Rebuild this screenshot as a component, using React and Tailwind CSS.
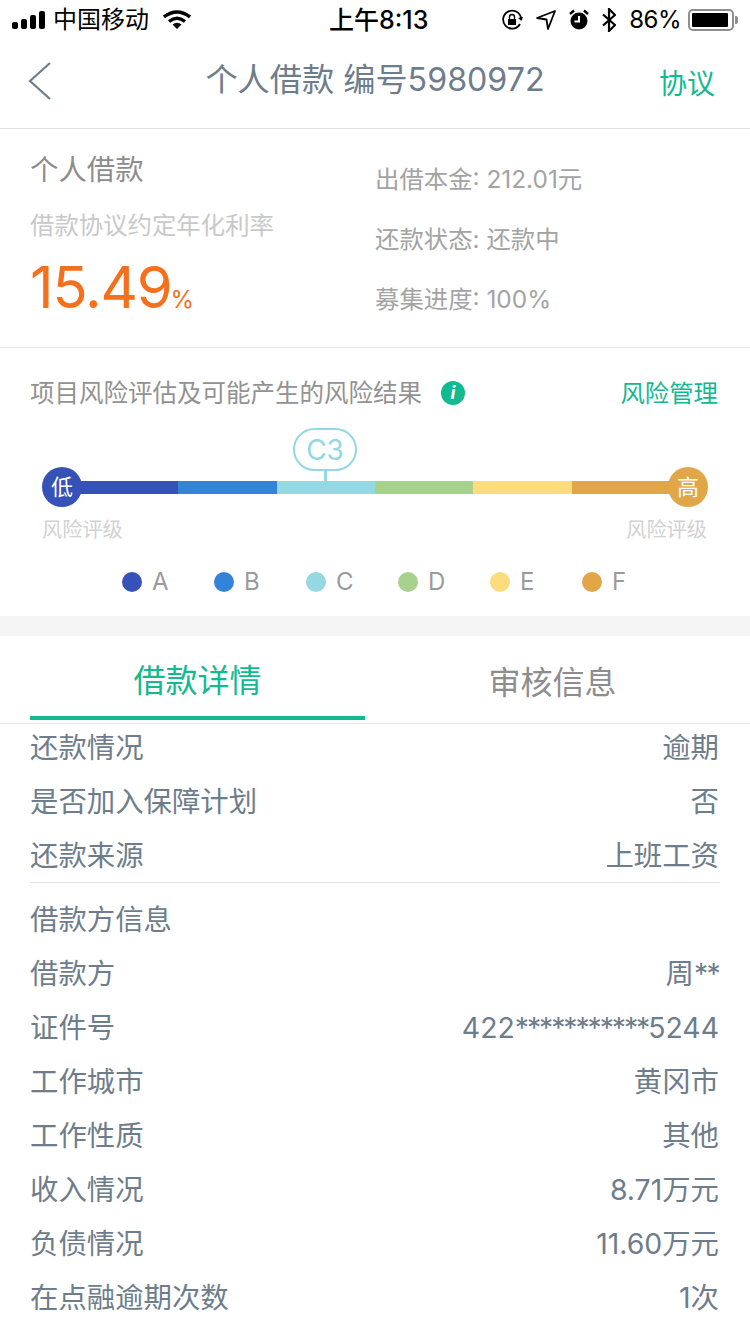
const cjk = "font-['Inter','Noto_Sans_CJK_SC',sans-serif]"

const StatusBar = () => (
  <div className="h-[40px] flex items-center pl-3 pr-[12px] text-black">
    <div className="flex items-center w-[317px]">
      <svg width="36" height="18" viewBox="0 0 36 18" fill="black">
        <rect x="0" y="11" width="6" height="7" rx="2" />
        <rect x="9" y="8" width="6" height="10" rx="2" />
        <rect x="18" y="4" width="6" height="14" rx="2" />
        <rect x="27" y="0" width="6" height="18" rx="2" />
      </svg>
      <span className="ml-[5px] text-[24px] leading-none">中国移动</span>
      <svg className="ml-[14px]" width="28" height="20" viewBox="0 0 28 20" fill="none" stroke="black" strokeWidth="3.4">
        <path d="M1 7 Q14 -3 27 7" />
        <path d="M6 11.5 Q14 5 22 11.5" />
        <path d="M14 19 L9.5 14.5 Q14 11 18.5 14.5 Z" fill="black" stroke="none" />
      </svg>
    </div>
    <span className="text-[25px] font-medium leading-none">上午8:13</span>
    <div className="ml-auto flex items-center gap-[13px]">
      <svg width="22" height="22" viewBox="0 0 22 22" fill="none" stroke="black" strokeWidth="1.8">
        <path d="M19 15 A9 9 0 1 1 20 9" />
        <path d="M17 9 L20.5 12 L22 8" fill="black" stroke="none" />
        <rect x="7" y="10" width="8" height="6" fill="black" stroke="none" />
        <path d="M8.5 10 V8 A2.5 2.5 0 0 1 13.5 8 V10" strokeWidth="1.4" />
      </svg>
      <svg width="20" height="20" viewBox="0 0 20 20" fill="none" stroke="black" strokeWidth="1.8">
        <path d="M1 8 L19 1 L12 19 L10.5 9.5 Z" strokeLinejoin="round" />
      </svg>
      <svg width="20" height="22" viewBox="0 0 20 22" fill="black">
        <circle cx="10" cy="12" r="8.5" />
        <path d="M10 7 V12.5 H5.5" stroke="white" strokeWidth="2" fill="none" />
        <path d="M1 5 L5 1.5 M19 5 L15 1.5" stroke="black" strokeWidth="2.4" />
      </svg>
      <svg width="14" height="24" viewBox="0 0 14 24" fill="none" stroke="black" strokeWidth="2.2">
        <path d="M1 6.5 L13 17 L7 23 V1 L13 7 L1 17.5" />
      </svg>
      <div className="flex items-center gap-[7px]">
        <span className="text-[24px] tracking-[-0.5px] leading-none">86%</span>
        <div className="flex items-center">
          <div className="w-[46px] h-[22px] rounded-[5px] border-2 border-[#8e8e8e] p-[2px]">
            <div className="h-full w-[36px] bg-black rounded-[1px]" />
          </div>
          <div className="w-[3px] h-[8px] ml-[1px] bg-[#8e8e8e] rounded-r-[2px]" />
        </div>
      </div>
    </div>
  </div>
)

const Row = ({ label, value }) => (
  <div className="h-[54px] flex items-center justify-between text-[28.4px] text-[#6e7d8b] leading-none">
    <span>{label}</span>
    {value && <span className="mr-[1px]">{value}</span>}
  </div>
)

const Legend = ({ dot, label }) => (
  <div className="w-[92px] flex items-center gap-[10px]">
    <span className={`w-5 h-5 rounded-full ${dot}`} />
    <span className="text-[24px] leading-none text-[#9a9a9a]">{label}</span>
  </div>
)

const App = () => {
  return (
    <div className={`w-[750px] h-[1334px] overflow-hidden bg-white ${cjk}`}>
      <StatusBar />

      {/* Nav */}
      <div className="h-[89px] grid grid-cols-[1fr_auto_1fr] items-center border-b border-[#e2e2e2]">
        <div className="pl-[28px] -mt-[7px]">
          <svg width="24" height="38" viewBox="0 0 24 38" fill="none" stroke="#6e7d8b" strokeWidth="2.2">
            <path d="M22 1 L2 19 L22 37" />
          </svg>
        </div>
        <h1 className="text-[32.2px] font-normal text-[#6e7d8b] leading-none -mt-[8px]">个人借款 编号5980972</h1>
        <div className="text-right pr-[35px] text-[28px] leading-none text-[#13b98f] -mt-[1px]">协议</div>
      </div>

      {/* Summary */}
      <div className="h-[219px] flex border-b border-[#e6e6e6] px-[30px]">
        <div className="w-[345px] pt-[27px]">
          <div className="text-[28.4px] leading-none text-[#8d8d8d]">个人借款</div>
          <div className="mt-[29px] text-[24.4px] leading-none text-[#c9c9c9]">借款协议约定年化利率</div>
          <div className="mt-[20px] flex items-baseline text-[#f5701c] leading-none">
            <span className="text-[58px] tracking-[-1.2px] leading-none">15.49</span>
            <span className="-ml-[1px] text-[24px] leading-none">%</span>
          </div>
        </div>
        <div className="pt-[35px] flex flex-col gap-[30px] text-[24.4px] leading-[30px] text-[#a3a3a3]">
          <div>出借本金: 212.01元</div>
          <div>还款状态: 还款中</div>
          <div>募集进度: 100%</div>
        </div>
      </div>

      {/* Risk */}
      <div className="h-[288px] pt-[30px] px-[30px] border-b-[20px] border-[#f5f5f5]">
        <div className="flex items-center justify-between h-[30px] pr-[2px]">
          <div className="flex items-center gap-[19px]">
            <span className="text-[24.5px] leading-none text-[#929292]">项目风险评估及可能产生的风险结果</span>
            <span className="w-6 h-6 rounded-full bg-[#13b98f] text-white text-[18px] font-bold italic flex items-center justify-center leading-none">i</span>
          </div>
          <span className="text-[24.4px] leading-none text-[#13b98f]">风险管理</span>
        </div>

        <div className="relative mt-[20px] ml-[12px] mr-[12px] h-[80px]">
          <div className="absolute left-[251px] top-0 flex flex-col items-center">
            <div className="w-[64px] h-[43px] rounded-[22px] border-2 border-[#93d8e2] bg-white text-[#93d8e2] text-[28px] leading-none flex items-center justify-center">C3</div>
            <div className="w-[3px] h-[10px] bg-[#93d8e2]" />
          </div>
          <div className="absolute left-[20px] right-[20px] top-[53px] h-[13px] flex">
            <div className="w-[116px] bg-[#3652b8]" />
            <div className="w-[99px] bg-[#3384d8]" />
            <div className="w-[98px] bg-[#93d8e2]" />
            <div className="w-[98px] bg-[#a9d18e]" />
            <div className="w-[99px] bg-[#fbdd7e]" />
            <div className="flex-1 bg-[#e0a647]" />
          </div>
          <div className="absolute left-0 top-[39px] w-10 h-10 rounded-full bg-[#3652b8] text-white text-[22px] leading-none flex items-center justify-center">低</div>
          <div className="absolute right-0 top-[39px] w-10 h-10 rounded-full bg-[#e0a647] text-white text-[22px] leading-none flex items-center justify-center">高</div>
        </div>

        <div className="flex justify-between ml-[12px] mr-[13px] mt-[12px] text-[20.2px] leading-none text-[#d2d2d2]">
          <span>风险评级</span>
          <span>风险评级</span>
        </div>

        <div className="flex ml-[92px] mt-[30px]">
          <Legend dot="bg-[#3652b8]" label="A" />
          <Legend dot="bg-[#3384d8]" label="B" />
          <Legend dot="bg-[#93d8e2]" label="C" />
          <Legend dot="bg-[#a9d18e]" label="D" />
          <Legend dot="bg-[#fbdd7e]" label="E" />
          <Legend dot="bg-[#e0a647]" label="F" />
        </div>
      </div>

      {/* Tabs */}
      <div className="h-[88px] flex border-b border-[#e6e6e6] pl-[30px]">
        <div className="w-[335px] h-[84px] pt-[10px] border-b-4 border-[#13b98f] flex items-center justify-center text-[32px] leading-none text-[#13b98f]">借款详情</div>
        <div className="flex-1 h-[84px] pt-[10px] flex items-center justify-center text-[32px] leading-none text-[#8d8d8d] pr-[10px]">审核信息</div>
      </div>

      {/* Details */}
      <div className="px-[30px] mt-[-3px]">
        <div className="h-[162px] border-b border-[#e2e2e2]">
          <Row label="还款情况" value="逾期" />
          <Row label="是否加入保障计划" value="否" />
          <Row label="还款来源" value="上班工资" />
        </div>
        <div className="pt-[10px]">
          <Row label="借款方信息" />
          <Row label="借款方" value={<>周<span className="tracking-[-1.7px]">**</span></>} />
          <Row label="证件号" value={<>422<span className="tracking-[-2.1px]">***********</span>5244</>} />
          <Row label="工作城市" value="黄冈市" />
          <Row label="工作性质" value="其他" />
          <Row label="收入情况" value="8.71万元" />
          <Row label="负债情况" value="11.60万元" />
          <Row label="在点融逾期次数" value="1次" />
        </div>
      </div>
    </div>
  )
}

export default App
